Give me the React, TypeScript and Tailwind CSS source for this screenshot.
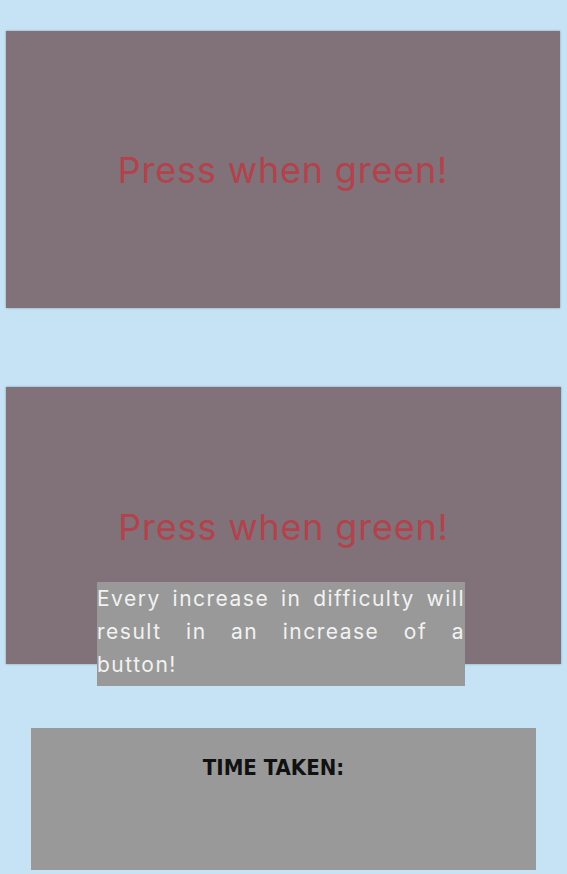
export default function App() {
    return (
        <div className="min-h-[874px] w-[567px] bg-[#c5e3f5] pt-[31px] flex flex-col items-center">
            {/* panel uno */}
            <div className="w-[554px] h-[277px] ml-[-1px] bg-[#817179] shadow-[0_0_2px_rgba(60,80,110,0.5)] flex items-center justify-center">
                <p className="text-[36px] text-[#b2424c] font-['Inter',sans-serif] tracking-[0.8px]">Press when green!</p>
            </div>

            {/* panel dos */}
            <div className="relative mt-[79px] w-[555px] h-[277px] bg-[#817179] shadow-[0_0_2px_rgba(60,80,110,0.5)] flex items-center justify-center">
                <p className="text-[36px] text-[#b2424c] font-['Inter',sans-serif] tracking-[0.8px] mt-[3px]">Press when green!</p>
                <div className="absolute left-[91px] top-[195px] w-[368px] h-[104px] bg-[#999999]">
                    <p className="text-[21px] leading-[33px] text-justify text-[#f2f2f2] font-['Inter',sans-serif] tracking-[1.5px]">
                        Every increase in difficulty will result in an increase of a button!
                    </p>
                </div>
            </div>

            {/* tiempo */}
            <div className="mt-[64px] w-[505px] h-[142px] bg-[#999999] flex flex-col items-center pt-[23px]">
                <p className="text-[22px] font-bold text-[#111] font-['DejaVu_Sans_Condensed','DejaVu_Sans',sans-serif] mr-[20px]">TIME TAKEN:</p>
            </div>
        </div>
    );
}
